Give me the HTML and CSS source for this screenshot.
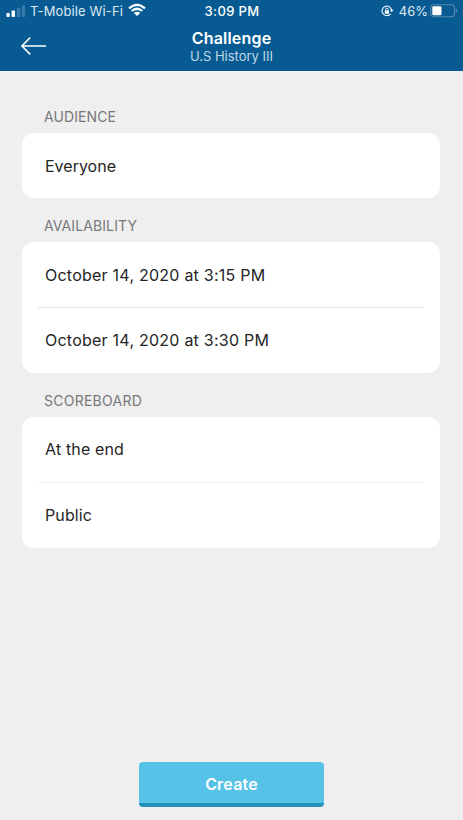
FILE: index.html
```html
<!DOCTYPE html>
<html lang="en">
<head>
<meta charset="utf-8">
<title>Challenge</title>
<link rel="stylesheet" href="styles.css">
</head>
<body>
<div class="screen">
  <header class="header">
    <div class="status">
      <div class="carrier">
        <svg class="signal" width="20" height="13" viewBox="0 0 20 13">
          <rect x="0.5" y="9" width="3.2" height="4" rx="0.8"/>
          <rect x="5.6" y="6.5" width="3.4" height="6.5" rx="0.8"/>
          <rect class="dim" x="10.9" y="3.8" width="3.3" height="9.2" rx="0.8"/>
          <rect class="dim" x="15.8" y="1.3" width="3.3" height="11.7" rx="0.8"/>
        </svg>
        <span class="carrier-name">T-Mobile Wi-Fi</span>
        <svg class="wifi" width="18" height="14" viewBox="0 0 18 14">
          <path d="M1 5.3Q9-1.7 17 5.3M3.7 8Q9 3.5 14.3 8" fill="none" stroke="currentColor" stroke-width="2.2"/>
          <path d="M5.8 9.9Q9 7.4 12.2 9.9L9 13Z" fill="currentColor"/>
        </svg>
      </div>
      <span class="time">3:09 PM</span>
      <div class="power">
        <svg class="lock" width="13" height="12" viewBox="0 0 13 12">
          <path d="M10.6 5A4.8 4.8 0 1 0 9.6 8.9" fill="none" stroke="currentColor" stroke-width="1.1"/>
          <path d="M8.9 4.8H12.5L10.7 7.2Z" fill="currentColor"/>
          <rect x="3.8" y="5.4" width="4.2" height="3.3" rx="0.5" fill="currentColor"/>
          <path d="M4.7 5.6V4.3A1.2 1.2 0 0 1 7.1 4.3V5.6" fill="none" stroke="currentColor" stroke-width="0.9"/>
        </svg>
        <span class="percent">46%</span>
        <svg class="battery" width="28" height="14" viewBox="0 0 28 14">
          <rect x="0.7" y="0.7" width="23.8" height="12" rx="3" fill="none" stroke="#5589b0" stroke-width="1.1"/>
          <rect x="2.3" y="2.2" width="9.2" height="9" rx="1.3" fill="#fff"/>
          <path d="M25.7 4.6Q27.3 5.2 27.3 6.7T25.7 8.8Z" fill="#5589b0"/>
        </svg>
      </div>
    </div>
    <div class="navbar">
      <svg class="back" width="27" height="20" viewBox="0 0 27 20">
        <path d="M10.2 1.5L2 10L10.2 18.4M2 10H26" fill="none" stroke="currentColor" stroke-width="1.6"/>
      </svg>
      <div class="titles">
        <h1 class="title">Challenge</h1>
        <p class="subtitle">U.S History III</p>
      </div>
    </div>
  </header>
  <main class="content">
    <h2 class="label l-audience">AUDIENCE</h2>
    <section class="card">
      <div class="row">Everyone</div>
    </section>
    <h2 class="label">AVAILABILITY</h2>
    <section class="card">
      <div class="row r-date">October 14, 2020 at 3:15 PM</div>
      <div class="row r-date">October 14, 2020 at 3:30 PM</div>
    </section>
    <h2 class="label l-scoreboard">SCOREBOARD</h2>
    <section class="card faint">
      <div class="row r-end">At the end</div>
      <div class="row r-public">Public</div>
    </section>
  </main>
  <footer class="footer">
    <button class="create" type="button">Create</button>
  </footer>
</div>
</body>
</html>
```

FILE: styles.css
```css
* {
  box-sizing: border-box;
}

body {
  margin: 0;
  font-family: Inter, "Liberation Sans", sans-serif;
  background: #efefef;
}

.screen {
  display: flex;
  flex-direction: column;
  height: 820px;
}

.header {
  height: 71px;
  background: #085b92;
  color: #fff;
}

.status {
  display: grid;
  grid-template-columns: 1fr auto 1fr;
  align-items: center;
  height: 22px;
  padding: 0 5px 0 6px;
  font-size: 13px;
  line-height: 22px;
}

.carrier,
.power {
  display: flex;
  align-items: center;
  height: 20px;
}

.carrier-name {
  margin-left: 4px;
  letter-spacing: 0.13px;
  color: #dce8f1;
}

.signal {
  margin-bottom: 1px;
  fill: #fff;
}

.signal .dim {
  fill: #3a7aa8;
}

.wifi {
  margin: 0 0 2px 5px;
}

.time {
  font-weight: 500;
  letter-spacing: 0.35px;
}

.power {
  justify-content: flex-end;
}

.lock {
  margin-right: 5px;
}

.percent {
  margin-right: 2px;
  color: #dce8f1;
}

.navbar {
  display: grid;
  grid-template-columns: 48px 1fr 48px;
  height: 49px;
}

.back {
  margin: 14px 0 0 20px;
}

.titles {
  padding-top: 6px;
  text-align: center;
}

.title {
  margin: 0;
  font-size: 16px;
  font-weight: 600;
  line-height: 21px;
  letter-spacing: 0.2px;
}

.subtitle {
  margin: 0;
  font-size: 13px;
  line-height: 15px;
  color: #c2d8e7;
}

.content {
  flex: 1;
  padding: 27px 22px 0;
}

.label {
  height: 44px;
  margin: 0;
  padding: 18px 0 0 22px;
  font-size: 14px;
  font-weight: 400;
  line-height: 20px;
  letter-spacing: 0.1px;
  color: #77787b;
}

.l-audience {
  height: 35px;
  padding-top: 9px;
}

.l-scoreboard {
  letter-spacing: 0.25px;
}

.card {
  width: 418px;
  border-radius: 12px;
  background: #fff;
}

.row {
  height: 65px;
  margin: 0 16px;
  padding-left: 7px;
  font-size: 16px;
  line-height: 66px;
  color: #252525;
}

.row + .row {
  height: 66px;
  border-top: 1px solid #e1e2e3;
  line-height: 65px;
}

.faint .row + .row {
  border-color: #efefef;
}

.r-date {
  letter-spacing: 0.24px;
}

.r-end {
  line-height: 65px;
  letter-spacing: 0.15px;
}

.r-public {
  letter-spacing: 0.1px;
}

.footer {
  display: flex;
  justify-content: center;
  padding-bottom: 13px;
}

.create {
  width: 185px;
  height: 45px;
  padding: 4px 0 0;
  border: 0;
  border-bottom: 4px solid #2292b9;
  border-radius: 4px;
  background: #57c2e7;
  font: 600 16px/37px Inter, "Liberation Sans", sans-serif;
  letter-spacing: 0.2px;
  color: #fff;
}
```
